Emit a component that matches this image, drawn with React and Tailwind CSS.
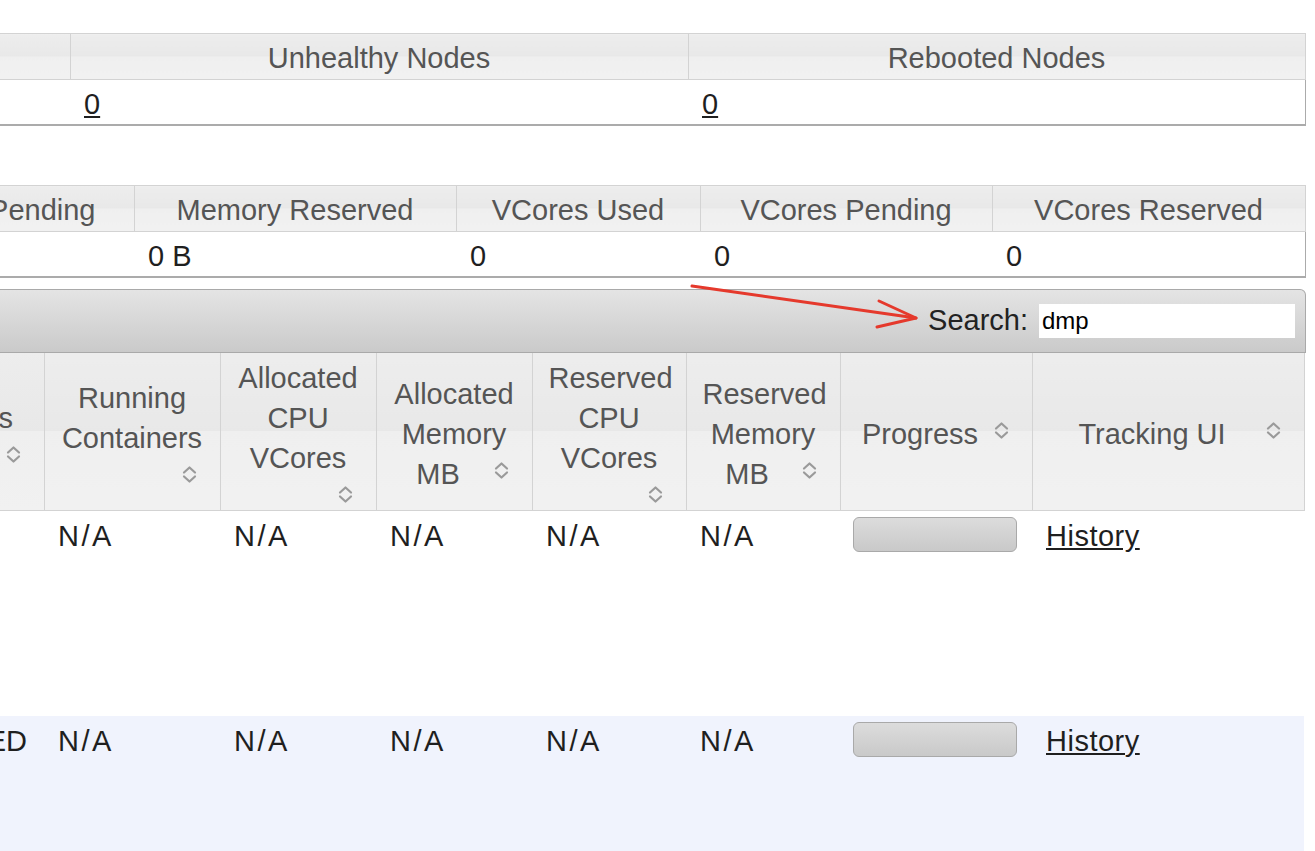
import React from "react";

const HDR =
  "bg-[linear-gradient(to_bottom,#ededed_0%,#e8e8e8_50%,#efefef_50%,#f1f1f1_100%)]";

function SortIcon() {
  return (
    <svg
      className="block"
      width="15"
      height="19"
      viewBox="0 0 15 19"
      fill="none"
      stroke="#9a9a9a"
      strokeWidth="2.2"
      strokeLinecap="round"
      strokeLinejoin="round"
    >
      <path d="M2 7.5L7.5 2.5L13 7.5" />
      <path d="M2 11.5L7.5 16.5L13 11.5" />
    </svg>
  );
}

function Sort() {
  return (
    <span className="float-right w-[32px] h-[32px] pl-[10px] pt-[7px]">
      <SortIcon />
    </span>
  );
}

function MainTh({ children }) {
  return (
    <th
      className={`border-r border-b border-[#d3d3d3] px-[16px] pt-[5px] pb-0 align-middle font-normal text-[#555] ${HDR}`}
    >
      <div className="flow-root text-center leading-[40px]">
        {children}
        <Sort />
      </div>
    </th>
  );
}

function Td({ children }) {
  return (
    <td className="align-top pt-[5px] pl-[14px] leading-[40px] text-[#1f1f1f]">
      {children}
    </td>
  );
}

function NA() {
  return <span className="tracking-[2.5px]">N/A</span>;
}

function Bar() {
  return (
    <div className="w-[164px] h-[35px] mt-[1px] rounded-[6px] border border-[#a9a9a9] bg-[linear-gradient(to_bottom,#dcdcdc,#c9c9c9)]" />
  );
}

function SummaryTable({ cols, heads, values, firstHead }) {
  return (
    <table className="table-fixed border-collapse w-[1305px] leading-[36px]">
      <colgroup>
        {cols.map((w, i) => (
          <col key={i} style={{ width: w }} />
        ))}
      </colgroup>
      <thead>
        <tr>
          <th
            className={`border-t border-r border-b border-[#d3d3d3] p-0 pt-[6px] pb-[3px] font-normal text-[#555] overflow-hidden ${HDR}`}
          >
            {firstHead ? (
              <div className="flex justify-end pr-[38px] overflow-hidden">
                <span className="whitespace-nowrap shrink-0">{firstHead}</span>
              </div>
            ) : (
              <div className="h-[36px]" />
            )}
          </th>
          {heads.map((h, i) => (
            <th
              key={i}
              className={`border-t border-r border-b border-[#d3d3d3] px-[10px] pt-[6px] pb-[3px] font-normal text-[#555] text-center whitespace-nowrap ${HDR}`}
            >
              {h}
            </th>
          ))}
        </tr>
      </thead>
      <tbody>
        <tr>
          <td className="border-b-2 border-[#ababab] pt-[6px] pb-[2px]">
            <div className="h-[36px]" />
          </td>
          {values.map((v, i) => (
            <td
              key={i}
              className={`border-b-2 border-[#ababab] pl-[14px] pt-[6px] pb-[2px] text-[#1f1f1f] ${
                i === values.length - 1 ? "border-r" : ""
              }`}
            >
              {v}
            </td>
          ))}
        </tr>
      </tbody>
    </table>
  );
}

export default function App() {
  return (
    <div className="relative w-[1315px] h-[851px] overflow-hidden bg-white font-['Liberation_Sans',Arial,Helvetica,sans-serif] text-[29px]">
      <div className="pt-[33px]">
        <SummaryTable
          cols={[70, 618, 617]}
          heads={["Unhealthy Nodes", "Rebooted Nodes"]}
          values={[
            <a key="a" className="underline">0</a>,
            <a key="b" className="underline">0</a>,
          ]}
        />
        <div className="mt-[59px]">
          <SummaryTable
            cols={[134, 322, 244, 292, 313]}
            firstHead="Memory Pending"
            heads={[
              "Memory Reserved",
              "VCores Used",
              "VCores Pending",
              "VCores Reserved",
            ]}
            values={["0 B", "0", "0", "0"]}
          />
        </div>

        {/* toolbar */}
        <div className="mt-[11px] w-[1306px] h-[64px] border border-l-0 border-[#a9a9a9] rounded-tr-[6px] bg-[linear-gradient(to_bottom,#e4e4e4,#cacaca)] flex items-center justify-end pr-[10px]">
          <span className="text-[#222]">Search:</span>
          <div className="ml-[11px] w-[256px] h-[34px] bg-white flex items-center pl-[3px] text-[24px] text-black">
            dmp
          </div>
        </div>

        {/* main table */}
        <table className="table-fixed border-collapse w-[1304px]">
          <colgroup>
            {[44, 176, 156, 156, 154, 154, 192, 272].map((w, i) => (
              <col key={i} style={{ width: w }} />
            ))}
          </colgroup>
          <thead>
            <tr>
              <th
                className={`border-r border-b border-[#d3d3d3] p-0 pt-[5px] align-middle font-normal text-[#555] overflow-hidden ${HDR}`}
              >
                <div className="w-[207px] ml-[-163px] px-[16px]">
                  <div className="flow-root text-center leading-[40px]">
                    FinalStatus
                    <Sort />
                  </div>
                </div>
              </th>
              <MainTh>Running Containers</MainTh>
              <MainTh>Allocated CPU VCores</MainTh>
              <MainTh>Allocated Memory MB</MainTh>
              <MainTh>Reserved CPU VCores</MainTh>
              <MainTh>Reserved Memory MB</MainTh>
              <MainTh>Progress</MainTh>
              <MainTh>Tracking UI</MainTh>
            </tr>
          </thead>
          <tbody>
            <tr className="h-[205px]">
              <td className="overflow-hidden" />
              <Td><NA /></Td>
              <Td><NA /></Td>
              <Td><NA /></Td>
              <Td><NA /></Td>
              <Td><NA /></Td>
              <td className="align-top pt-[5px] pl-[13px]">
                <Bar />
              </td>
              <Td>
                <a className="underline tracking-[0.5px]">History</a>
              </Td>
            </tr>
            <tr className="h-[140px] bg-[#f0f3fd]">
              <td className="align-top p-0 pt-[5px] overflow-hidden">
                <div className="flex justify-end pr-[17px] leading-[40px] text-[#1f1f1f] overflow-hidden">
                  <span className="whitespace-nowrap shrink-0">SUCCEEDED</span>
                </div>
              </td>
              <Td><NA /></Td>
              <Td><NA /></Td>
              <Td><NA /></Td>
              <Td><NA /></Td>
              <Td><NA /></Td>
              <td className="align-top pt-[5px] pl-[13px]">
                <Bar />
              </td>
              <Td>
                <a className="underline tracking-[0.5px]">History</a>
              </Td>
            </tr>
          </tbody>
        </table>
      </div>

      {/* annotation arrow */}
      <svg
        className="absolute left-0 top-0 pointer-events-none"
        width="1315"
        height="851"
        viewBox="0 0 1315 851"
        fill="none"
        stroke="#e5392c"
        strokeWidth="3"
        strokeLinecap="round"
        strokeLinejoin="round"
      >
        <path d="M692 286L916 318" />
        <path d="M879 301L916 318L877 327" />
      </svg>
    </div>
  );
}
